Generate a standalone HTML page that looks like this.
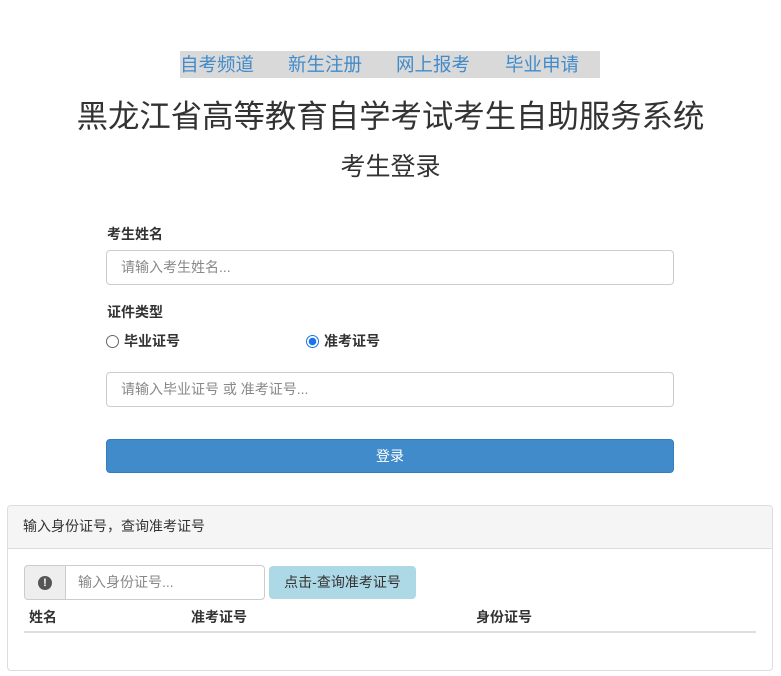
<!DOCTYPE html>
<html><head><meta charset="utf-8"><style>
*{box-sizing:border-box;margin:0;padding:0}
body{width:781px;height:676px;background:#fff;font-family:"Liberation Sans","Noto Sans CJK SC",sans-serif;color:#333;position:relative;overflow:hidden;font-size:14px}
.abs{position:absolute}
.nav{left:180px;top:51px;width:420px;height:27px;background:#d9d9d9;font-size:18.5px;color:#428bca;line-height:27px}
.nav span{position:absolute;top:0}
.lbl{font-size:14px;font-weight:bold;color:#333}
.inp{border:1px solid #ccc;border-radius:4px;height:35px;padding-left:14px;line-height:33px;color:#888;font-size:14px}
.radio{width:13px;height:13px;border-radius:50%;border:1px solid #666;display:inline-block}
</style></head><body>
<div class="abs nav"><span style="left:0">自考频道</span><span style="left:108px">新生注册</span><span style="left:216px">网上报考</span><span style="left:325px">毕业申请</span></div>
<div class="abs" style="left:0;width:781px;text-align:center;top:95px;font-size:31.4px;line-height:44px">黑龙江省高等教育自学考试考生自助服务系统</div>
<div class="abs" style="left:0;width:781px;text-align:center;top:150px;font-size:25px;line-height:34px">考生登录</div>
<div class="abs lbl" style="left:107px;top:224px">考生姓名</div>
<div class="abs inp" style="left:106px;top:250px;width:568px">请输入考生姓名...</div>
<div class="abs lbl" style="left:107px;top:302px">证件类型</div>
<div class="abs lbl" style="left:106px;top:331px;display:flex;align-items:center"><span class="radio" style="margin-right:5px"></span>毕业证号</div>
<div class="abs lbl" style="left:306px;top:331px;display:flex;align-items:center"><span class="radio" style="margin-right:5px;border:1px solid #1a73e8;background:radial-gradient(circle,#1a73e8 0 3.5px,#fff 4px)"></span>准考证号</div>
<div class="abs inp" style="left:106px;top:372px;width:568px">请输入毕业证号 或 准考证号...</div>
<div class="abs" style="left:106px;top:439px;width:568px;height:34px;background:#428bca;border:1px solid #357ebd;border-radius:4px;color:#fff;text-align:center;line-height:32px;font-size:14px">登录</div>
<div class="abs" style="left:7px;top:505px;width:766px;height:166px;border:1px solid #ddd;border-radius:4px;overflow:hidden">
 <div style="height:43px;background:#f5f5f5;border-bottom:1px solid #ddd;padding-left:15px;line-height:40px;font-size:14px">输入身份证号，查询准考证号</div>
 <div class="abs" style="left:16px;top:59px;width:42px;height:35px;background:#eee;border:1px solid #ccc;border-radius:4px 0 0 4px;display:flex;align-items:center;justify-content:center"><span style="width:14px;height:14px;border-radius:50%;background:#555;color:#fff;font-weight:bold;font-size:11px;line-height:14px;text-align:center">!</span></div>
 <div class="abs inp" style="left:57px;top:59px;width:200px;border-radius:0 4px 4px 0;padding-left:12px">输入身份证号...</div>
 <div class="abs" style="left:261px;top:60px;width:147px;height:33px;background:#add8e6;border-radius:4px;line-height:33px;text-align:center;font-size:14px">点击-查询准考证号</div>
 <div class="abs lbl" style="left:21px;top:101px">姓名</div>
 <div class="abs lbl" style="left:183px;top:101px">准考证号</div>
 <div class="abs lbl" style="left:468px;top:101px">身份证号</div>
 <div class="abs" style="left:16px;top:125px;width:732px;height:2px;background:#ddd"></div>
</div>
</body></html>
